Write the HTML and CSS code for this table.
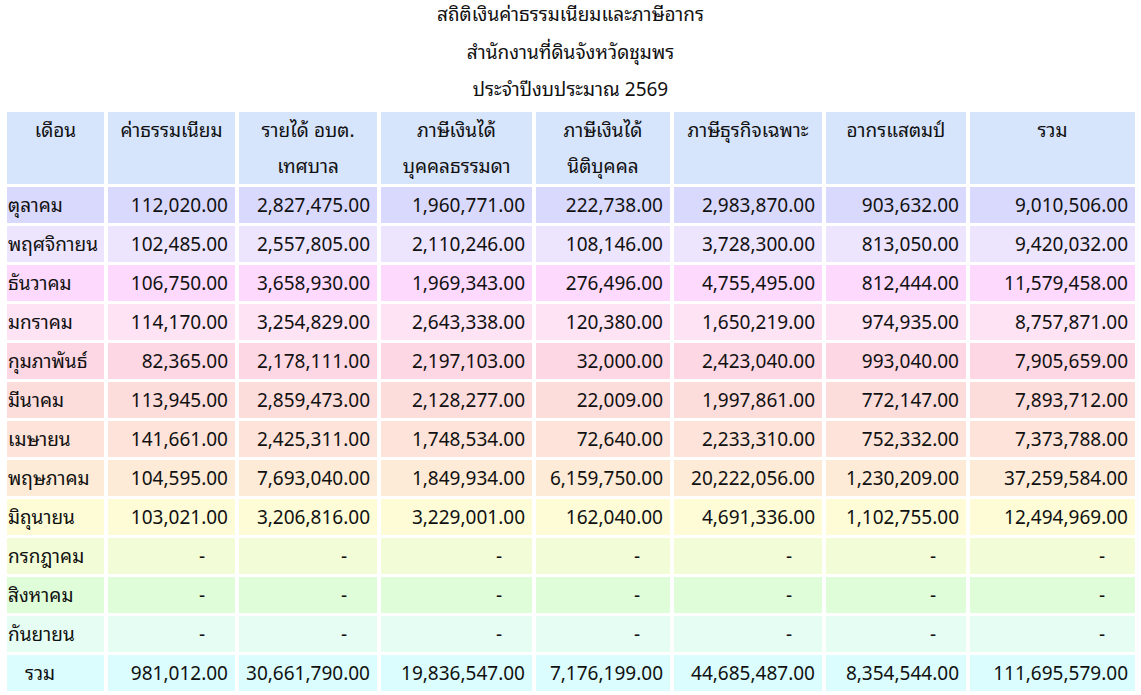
FILE: index.html
```html
<!DOCTYPE html>
<html lang="th">
<head>
<meta charset="utf-8">
<title>สถิติเงินค่าธรรมเนียมและภาษีอากร</title>
<link rel="stylesheet" href="styles.css">
</head>
<body>
<div class="title">
  <div class="title-line">สถิติเงินค่าธรรมเนียมและภาษีอากร</div>
  <div class="title-line">สำนักงานที่ดินจังหวัดชุมพร</div>
  <div class="title-line">ประจำปีงบประมาณ 2569</div>
</div>
<table class="stats">
  <thead>
    <tr class="head">
      <th class="c1">เดือน</th>
      <th class="c2">ค่าธรรมเนียม</th>
      <th class="c3">รายได้ อบต.<br>เทศบาล</th>
      <th class="c4">ภาษีเงินได้<br>บุคคลธรรมดา</th>
      <th class="c5">ภาษีเงินได้<br>นิติบุคคล</th>
      <th class="c6">ภาษีธุรกิจเฉพาะ</th>
      <th class="c7">อากรแสตมป์</th>
      <th class="c8">รวม</th>
    </tr>
  </thead>
  <tbody>
    <tr class="r1"><td class="m">ตุลาคม</td><td>112,020.00</td><td>2,827,475.00</td><td>1,960,771.00</td><td>222,738.00</td><td>2,983,870.00</td><td>903,632.00</td><td>9,010,506.00</td></tr>
    <tr class="r2"><td class="m">พฤศจิกายน</td><td>102,485.00</td><td>2,557,805.00</td><td>2,110,246.00</td><td>108,146.00</td><td>3,728,300.00</td><td>813,050.00</td><td>9,420,032.00</td></tr>
    <tr class="r3"><td class="m">ธันวาคม</td><td>106,750.00</td><td>3,658,930.00</td><td>1,969,343.00</td><td>276,496.00</td><td>4,755,495.00</td><td>812,444.00</td><td>11,579,458.00</td></tr>
    <tr class="r4"><td class="m">มกราคม</td><td>114,170.00</td><td>3,254,829.00</td><td>2,643,338.00</td><td>120,380.00</td><td>1,650,219.00</td><td>974,935.00</td><td>8,757,871.00</td></tr>
    <tr class="r5"><td class="m">กุมภาพันธ์</td><td>82,365.00</td><td>2,178,111.00</td><td>2,197,103.00</td><td>32,000.00</td><td>2,423,040.00</td><td>993,040.00</td><td>7,905,659.00</td></tr>
    <tr class="r6"><td class="m">มีนาคม</td><td>113,945.00</td><td>2,859,473.00</td><td>2,128,277.00</td><td>22,009.00</td><td>1,997,861.00</td><td>772,147.00</td><td>7,893,712.00</td></tr>
    <tr class="r7"><td class="m">เมษายน</td><td>141,661.00</td><td>2,425,311.00</td><td>1,748,534.00</td><td>72,640.00</td><td>2,233,310.00</td><td>752,332.00</td><td>7,373,788.00</td></tr>
    <tr class="r8"><td class="m">พฤษภาคม</td><td>104,595.00</td><td>7,693,040.00</td><td>1,849,934.00</td><td>6,159,750.00</td><td>20,222,056.00</td><td>1,230,209.00</td><td>37,259,584.00</td></tr>
    <tr class="r9"><td class="m">มิถุนายน</td><td>103,021.00</td><td>3,206,816.00</td><td>3,229,001.00</td><td>162,040.00</td><td>4,691,336.00</td><td>1,102,755.00</td><td>12,494,969.00</td></tr>
    <tr class="r10"><td class="m">กรกฎาคม</td><td class="dash">-</td><td class="dash">-</td><td class="dash">-</td><td class="dash">-</td><td class="dash">-</td><td class="dash">-</td><td class="dash">-</td></tr>
    <tr class="r11"><td class="m">สิงหาคม</td><td class="dash">-</td><td class="dash">-</td><td class="dash">-</td><td class="dash">-</td><td class="dash">-</td><td class="dash">-</td><td class="dash">-</td></tr>
    <tr class="r12"><td class="m">กันยายน</td><td class="dash">-</td><td class="dash">-</td><td class="dash">-</td><td class="dash">-</td><td class="dash">-</td><td class="dash">-</td><td class="dash">-</td></tr>
    <tr class="r13"><td class="m total">รวม</td><td>981,012.00</td><td>30,661,790.00</td><td>19,836,547.00</td><td>7,176,199.00</td><td>44,685,487.00</td><td>8,354,544.00</td><td>111,695,579.00</td></tr>
  </tbody>
</table>
</body>
</html>
```

FILE: styles.css
```css
html, body {
  margin: 0;
  padding: 0;
  background: #ffffff;
}

body {
  font-family: "Noto Sans", "Noto Sans Thai Looped", "Tahoma", "Loma", "Garuda", "Noto Sans Thai", "DejaVu Sans", sans-serif;
  font-size: 19px;
  color: #111111;
}

.title {
  margin-top: -4px;
  text-align: center;
}

.title-line {
  line-height: 37.5px;
}

.stats {
  margin-left: 3px;
  border-collapse: separate;
  border-spacing: 4px 3px;
  table-layout: fixed;
  width: 1136px;
}

.stats th,
.stats td {
  box-sizing: border-box;
  padding: 0;
  line-height: 36px;
  height: 36px;
  white-space: nowrap;
}

.stats th {
  font-weight: normal;
  text-align: center;
  vertical-align: top;
  background: #d6e4fc;
}

.stats td {
  text-align: right;
  padding-right: 7px;
}

.stats td.m {
  text-align: left;
  padding-left: 1px;
  padding-right: 0;
}

.stats td.total {
  padding-left: 18px;
}

.stats td.dash {
  padding-right: 30px;
}

.c1 { width: 97px; }
.c2 { width: 127px; }
.c3 { width: 138px; }
.c4 { width: 151px; }
.c5 { width: 134px; }
.c6 { width: 148px; }
.c7 { width: 140px; }
.c8 { width: 165px; }

.r1 td { background: #d9d9fd; }
.r2 td { background: #ede4fe; }
.r3 td { background: #fcd9fd; }
.r4 td { background: #fde3f3; }
.r5 td { background: #fdd7e3; }
.r6 td { background: #fddcdc; }
.r7 td { background: #fde3d9; }
.r8 td { background: #fdebd7; }
.r9 td { background: #fdfcd7; }
.r10 td { background: #f2fdd7; }
.r11 td { background: #dffdd9; }
.r12 td { background: #e6fdf3; }
.r13 td { background: #dbfdfd; }
```
